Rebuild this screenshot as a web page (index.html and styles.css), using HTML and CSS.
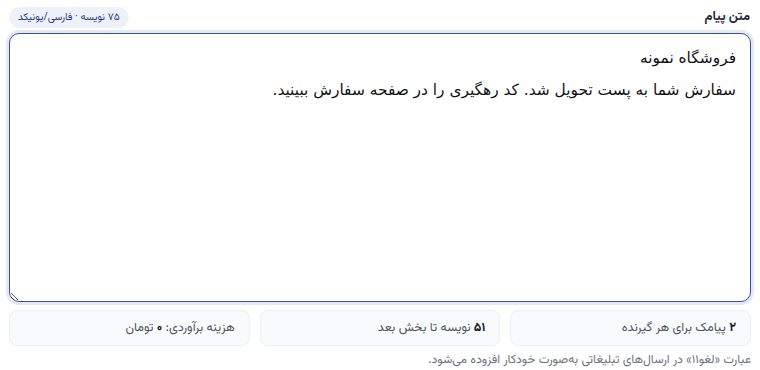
FILE: index.html
```html
<!DOCTYPE html>
<html lang="fa" dir="rtl">
<head>
<meta charset="utf-8">
<link rel="stylesheet" href="styles.css">
</head>
<body>
<div class="wrap">
  <div class="head">
    <label class="label" for="msg">متن پیام</label>
    <span class="badge">۷۵ نویسه · فارسی/یونیکد</span>
  </div>
  <textarea id="msg" class="msg">فروشگاه نمونه
سفارش شما به پست تحویل شد. کد رهگیری را در صفحه سفارش ببینید.</textarea>
  <div class="stats">
    <div class="stat"><span><b>۲</b> پیامک برای هر گیرنده</span></div>
    <div class="stat"><span><b>۵۱</b> نویسه تا بخش بعد</span></div>
    <div class="stat"><span>هزینه برآوردی: <b>۰</b> تومان</span></div>
  </div>
  <p class="note">عبارت «لغو۱۱» در ارسال‌های تبلیغاتی به‌صورت خودکار افزوده می‌شود.</p>
</div>
</body>
</html>
```
FILE: styles.css
```css
html, body { margin: 0; padding: 0; background: #fff; }
body { font-family: Vazirmatn, "DejaVu Sans", sans-serif; color: #111827; }
.wrap { padding: 6px 9px 0 9px; display: flex; flex-direction: column; }
.head { display: flex; justify-content: space-between; align-items: center; height: 22px; }
.label { font-size: 13px; font-weight: 700; color: #1f2937; padding-right: 1px; }
.badge { font-size: 10.2px; color: #1e3a8a; background: #eef2f8; border-radius: 11px; padding: 0 9px; height: 21px; line-height: 21px; }
.msg {
  margin-top: 5px;
  box-sizing: border-box;
  width: 100%;
  height: 269px;
  border: 1px solid #3b4da0;
  border-radius: 10px;
  box-shadow: 0 0 0 3px #e3e9f7;
  outline: none;
  padding: 8px 14px;
  font-family: "DejaVu Sans", sans-serif;
  font-size: 15.4px;
  line-height: 32px;
  color: #111;
  resize: vertical;
  direction: rtl;
  background: #fff;
}
.stats { display: grid; grid-template-columns: repeat(3, 1fr); gap: 10px; margin-top: 8px; }
.stat {
  background: #f8fafc;
  border: 1px solid #eceff3;
  border-radius: 8px;
  height: 36px;
  box-sizing: border-box;
  padding: 0 14px;
  display: flex;
  align-items: center;
  font-size: 12.5px;
  color: #4b5563;
}
.stat b { color: #111827; font-weight: 700; }
.note { margin: 6px 0 0 0; font-size: 12.2px; line-height: 16px; color: #6b7280; }
```
